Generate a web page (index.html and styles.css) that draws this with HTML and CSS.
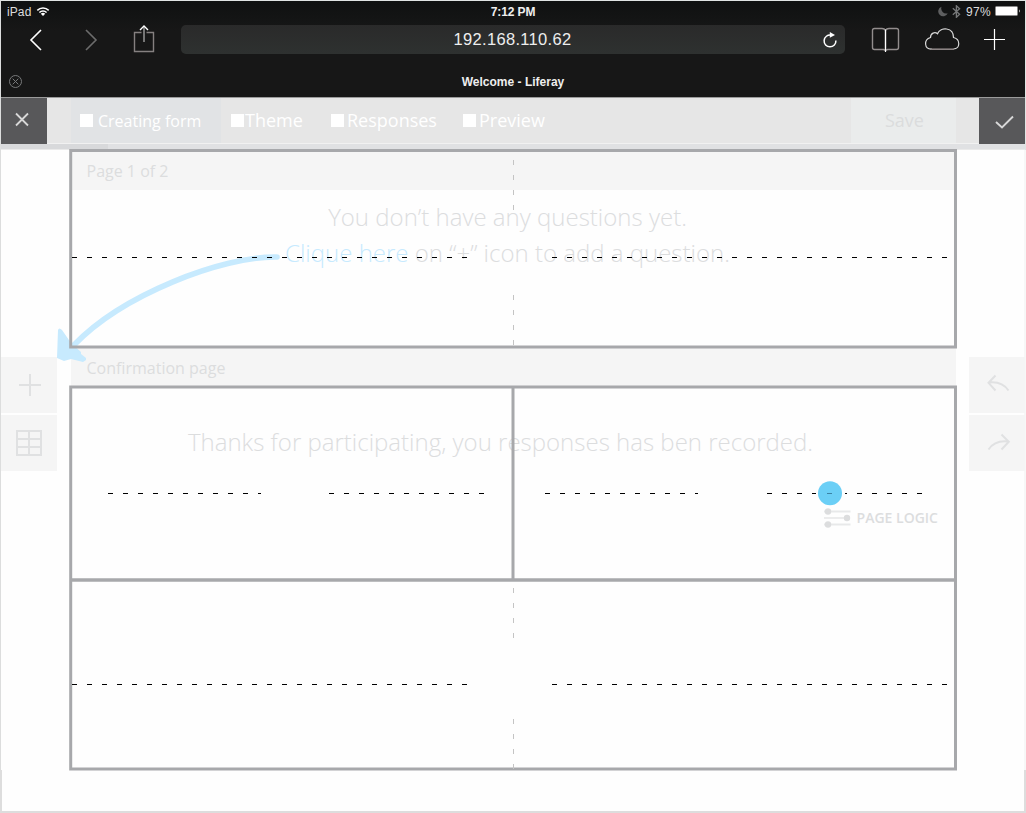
FILE: index.html
```html
<!DOCTYPE html>
<html lang="en">
<head>
<meta charset="utf-8">
<title>Welcome - Liferay</title>
<link rel="stylesheet" href="styles.css">
</head>
<body>
<div class="screen">
  <header class="browser">
    <div class="status">
      <div class="status-left"><span>iPad</span>
        <svg class="wifi" width="14" height="11" viewBox="0 0 14 11"><path d="M1.3 4.4a8 8 0 0 1 11.4 0M3.4 6.6a5 5 0 0 1 7.2 0" fill="none" stroke="#fff" stroke-width="1.5"/><path d="M4.8 7.8a3.2 3.2 0 0 1 4.4 0L7 10z" fill="#fff"/></svg>
      </div>
      <b class="clock">7:12 PM</b>
      <div class="status-right">
        <svg width="10" height="11" viewBox="0 0 10 11"><path d="M3.500 .8A4.900 4.900 0 1 0 9.700 7.200A5 5 0 0 1 3.500 .8z" fill="#5e5f60"/></svg>
        <svg class="bt" width="9" height="13" viewBox="0 0 9 13"><path d="M.8 3.300l6.800 5.900L4.400 12.300V.8l3.200 3L.8 9.700" fill="none" stroke="#77797a" stroke-width="1.300"/></svg>
        <span>97%</span>
        <svg class="battery" width="26" height="10" viewBox="0 0 26 10"><rect x=".5" y=".5" width="22" height="9" rx="1" fill="#fff" stroke="#8b8b8b"/><path d="M24 3.200q1.600 1.800 0 3.600z" fill="#fff"/></svg>
      </div>
    </div>
    <div class="address-row">
      <svg class="nav-icons" width="180" height="40" viewBox="0 0 180 40" fill="none">
        <path d="M40 8L30 18L40 28" stroke="#fff" stroke-width="1.600"/>
        <path d="M85 8L95 18L85 28" stroke="#6c6c6c" stroke-width="1.600"/>
        <path d="M140.500 10.500H133.500V29.500H152.500V10.500H145.500" stroke="#858080" stroke-width="1.400"/>
        <path d="M143 5V20" stroke="#aaa" stroke-width="1.300"/><path d="M139 8L143 4L147 8" stroke="#fff" stroke-width="1.400"/>
      </svg>
      <div class="address"><span>192.168.110.62</span>
        <svg class="reload" width="16" height="18" viewBox="0 0 16 18"><path d="M9 4.100A5.900 5.900 0 1 0 13.900 9.500" fill="none" stroke="#fff" stroke-width="1.500"/><path d="M7.800 1L13 4.100L7.800 6.800z" fill="#fff"/></svg>
      </div>
      <svg class="nav-icons" width="180" height="40" viewBox="0 0 180 40" fill="none">
        <path d="M40.500 28V8.500Q39.500 6.500 37 6.500H29.500Q27.500 6.500 27.500 8.500V25.500Q27.500 27.500 29.500 27.500H38.500L40.500 28.500L42.500 27.500H51.500Q53.500 27.500 53.500 25.500V8.500Q53.500 6.500 51.500 6.500H44Q41.500 6.500 40.500 8.500" stroke="#928d8d" stroke-width="1.400"/>
        <path d="M40.500 7.500V30" stroke="#fff" stroke-width="1.200"/>
        <path d="M87 27C79 27.500 78.500 17.500 85.500 15.500C85.500 11 90 9.500 92.500 11.800C95.500 4.500 108.500 5 108.500 15.500C115.500 17 115.500 27 108.500 27" stroke="#d8d8d8" stroke-width="1.200"/>
        <path d="M86 27.200H109" stroke="#8b8383" stroke-width="1.600"/>
        <path d="M149.500 7V28M139 17.500H160" stroke="#fff" stroke-width="1.200"/>
      </svg>
    </div>
    <div class="browser-tab">
      <svg width="15" height="15" viewBox="0 0 15 15" fill="none" stroke="#77797a"><circle cx="7.500" cy="7.500" r="6"/><path d="M4.700 4.700l5.600 5.600M10.300 4.700l-5.600 5.600"/></svg>
      <b>Welcome - Liferay</b>
    </div>
  </header>

  <nav class="toolbar">
    <div class="action"><svg width="46" height="46" viewBox="0 0 46 46"><path d="M15 15.500L27 27.500M27 15.500L15 27.500" fill="none" stroke="#d8d8d8" stroke-width="1.800"/></svg></div>
    <div class="tab active"><i></i><span>Creating form</span></div>
    <div class="tab theme"><i></i><span>Theme</span></div>
    <div class="tab responses"><i></i><span>Responses</span></div>
    <div class="tab preview"><i></i><span>Preview</span></div>
    <div class="save">Save</div>
    <div class="action"><svg width="46" height="46" viewBox="0 0 46 46"><path d="M17 24L23 29.500L34 18.500" fill="none" stroke="#d8d8d8" stroke-width="1.900"/></svg></div>
  </nav>
  <div class="progress"><div></div></div>

  <main class="workspace">
    <aside class="rail">
      <div><svg width="56" height="56" viewBox="0 0 56 56"><path d="M29 17V39M18 28H40" stroke="#e0e1e2" stroke-width="2" fill="none"/></svg></div>
      <div><svg width="56" height="56" viewBox="0 0 56 56"><path d="M16 16H40V40H16zM28 16V40M16 24H40M16 32H40" stroke="#e0e1e2" stroke-width="2" fill="none"/></svg></div>
    </aside>
    <section class="form">
      <h2 class="page-title">Page 1 of 2</h2>
      <div class="empty">
        <p class="line-one">You don’t have any questions yet.</p>
        <p class="line-two"><a>Clique here</a> on “+” icon to add a question.</p>
      </div>
      <h2 class="page-title confirm">Confirmation page</h2>
      <p class="thanks">Thanks for participating, you responses has ben recorded.</p>
      <div class="logic">
        <svg width="28" height="20" viewBox="0 0 28 20"><path d="M1 3.500H27.500M1 16.500H27.500" stroke="#e8e9ea" stroke-width="2"/><path d="M1 10H27" stroke="#d9dadb" stroke-width="1"/><g fill="#dcddde"><circle cx="5" cy="3.500" r="3.200"/><circle cx="24" cy="10" r="3.200"/><circle cx="5" cy="16.500" r="3.200"/></g></svg>
        <span>PAGE LOGIC</span>
      </div>
    </section>
    <aside class="rail">
      <div><svg width="56" height="56" viewBox="0 0 56 56"><path d="M39.500 33.500Q33 24 20 25.500M26.500 18.500L19.500 25.800L26.500 33.500" stroke="#e0e1e2" stroke-width="2" fill="none"/></svg></div>
      <div><svg width="56" height="56" viewBox="0 0 56 56"><path d="M19.500 34.500Q26 25 39 26.500M32.500 19.500L39.800 26.800L32.500 34.500" stroke="#e0e1e2" stroke-width="2" fill="none"/></svg></div>
    </aside>
  </main>

  <svg class="wireframe" width="1026" height="813" viewBox="0 0 1026 813" fill="none">
    <path d="M277 257C222 256 122 295 74 345" stroke="#c7eafe" stroke-width="5.600" stroke-linecap="round"/>
    <path d="M58 330Q59 327 62 330L71 343L81 352V354L86 358V360L83 362L71 359L64 361L57 358Z" fill="#c7eafe"/>
    <g stroke="#a7a8ab" stroke-width="3">
      <path d="M70.700 150.500H955.500V347H70.700z"/>
      <path d="M70.700 387H955.500V769H70.700z"/>
      <path d="M513 387V580"/>
      <path d="M70 579.900H956" stroke-width="3.500"/>
    </g>
    <g stroke="#c4c4c4" stroke-dasharray="5 10">
      <path d="M513.500 160V210M513.500 295V345M513.500 588V638M513.500 719V769"/>
    </g>
    <circle cx="830" cy="493.200" r="12" fill="#6bcff6"/>
    <g stroke="#000" stroke-dasharray="5 10">
      <path d="M72 257.500H467M552 257.500H947M72 684.500H467M552 684.500H947"/>
      <path d="M108 493.500H261M329 493.500H484M545 493.500H698M767 493.500H816"/>
      <path d="M857 493.500H922"/>
    </g>
    <path d="M827 493.500H832" stroke="#3a83a5"/><path d="M845 493.500H847" stroke="#000"/>
  </svg>
</div>
</body>
</html>
```

FILE: styles.css
```css
* { box-sizing: border-box; }
body { margin: 0; background: #fff; font-family: "Open Sans", sans-serif; }
h2, p { margin: 0; font-weight: 400; }
svg { display: block; flex: none; }
.screen { position: relative; width: 1026px; height: 813px; overflow: hidden; display: flex; flex-direction: column; padding: 1px 1px 2px; background:
  linear-gradient(#ddd, #ddd) 0 811px / 1026px 2px no-repeat,
  linear-gradient(#ddd, #ddd) 0 770px / 2px 43px no-repeat,
  linear-gradient(#ddd, #ddd) 1024px 770px / 2px 43px no-repeat,
  linear-gradient(#dcdddd, #dcdddd) 0 0 / 1px 770px no-repeat,
  linear-gradient(#e0e4e3, #e0e4e3) 0 0 / 1026px 1px no-repeat,
  linear-gradient(#e0e4e3, #e0e4e3) 1025px 0 / 1px 150px no-repeat,
  linear-gradient(#f7f7f7, #f7f7f7) 1024px 150px / 2px 620px no-repeat, #fefefe; }
.browser { height: 97px; flex: none; background: linear-gradient(#0f1111, #171717 30px); border-bottom: 1px solid #9b9b9b; color: #fff; font-family: "Liberation Sans", sans-serif; }
.status { height: 20px; display: grid; grid-template-columns: 1fr auto 1fr; align-items: center; font-size: 12px; color: #ddd; }
.status-left, .status-right { display: flex; align-items: center; }
.status-left { padding-left: 6px; gap: 5px; }
.status-left span { letter-spacing: .1px; }
.status-right { justify-content: flex-end; padding-right: 4px; gap: 5px; letter-spacing: .3px; }
.status-right .bt { margin-left: -1px; }
.battery { margin-left: -1px; }
.clock { font-size: 12px; color: #eee; letter-spacing: -.1px; padding-top: 1px; }
.status-left span, .status-right span { padding-top: 1px; }
.address-row { height: 40px; display: flex; padding-top: 1px; }
.address { flex: 1; height: 29px; margin-top: 3px; border-radius: 5px; background: linear-gradient(#2a2a2a, #2e3130); display: flex; align-items: center; justify-content: flex-end; padding-right: 7px; font-size: 16.5px; color: #eee; letter-spacing: .33px; }
.address span { flex: 1; text-align: center; padding-left: 22px; }
.browser-tab { height: 37px; display: flex; align-items: center; padding: 3px 0 0 7px; font-size: 12px; }
.browser-tab b { flex: 1; text-align: center; padding: 1px 22px 0 0; color: #eee; }
.toolbar { height: 46px; flex: none; display: flex; background: #e6e6e6; border-bottom: 1px solid #f1f1f1; color: #fff; font-size: 18px; }
.action { width: 46px; height: 46px; background: #58585a; flex: none; }
.tab { display: flex; align-items: center; white-space: nowrap; }
.tab i { width: 13px; height: 13px; background: #fff; flex: none; }
.active { width: 150px; margin-left: 24px; padding-left: 9px; gap: 5px; background: #e1e3e5; font-size: 16px; }
.theme { width: 101px; padding-left: 10px; gap: 1px; }
.responses { width: 132px; padding-left: 9px; gap: 3px; }
.preview { width: 100px; padding-left: 9px; gap: 3px; }
.theme span, .responses span, .preview span { padding-bottom: 2px; }
.save { width: 105px; margin-left: auto; margin-right: 23px; padding: 0 0 2px 2px; background: #eaecec; color: #dbdcdd; display: flex; align-items: center; justify-content: center; }
.progress { height: 6px; flex: none; background: #e0e1e3; border-bottom: 1px solid #eaeaea; }
.progress div { width: 107px; height: 5px; background: #d8d9db; }
.workspace { flex: 1; display: grid; grid-template-columns: 56px 1fr 56px; }
.rail { padding-top: 207px; display: flex; flex-direction: column; gap: 2px; }
.rail div { height: 56px; background: #f5f5f5; }
.form { padding: 0 13px 0 14px; color: #dcddde; }
.page-title { height: 40px; padding: 2px 0 0 15.5px; background: #f5f5f5; font-size: 16px; line-height: 38px; }
.page-title.confirm { padding-top: 1px; }
.empty { height: 158px; padding-top: 9px; font-size: 24px; line-height: 36px; text-align: center; }
.empty p { font-weight: 300; white-space: nowrap; }
.line-one, .line-two { padding-right: 12px; }
.empty a { color: #c7eafe; }
.thanks { height: 112px; padding-top: 36px; padding-right: 26px; text-align: center; font-size: 24px; font-weight: 300; line-height: 36px; white-space: nowrap; }
.logic { display: flex; align-items: center; justify-content: flex-end; gap: 6px; padding: 8px 18px 0 0; font-size: 14px; font-weight: 600; line-height: 20px; }
.wireframe { position: absolute; left: 0; top: 0; pointer-events: none; }
```
